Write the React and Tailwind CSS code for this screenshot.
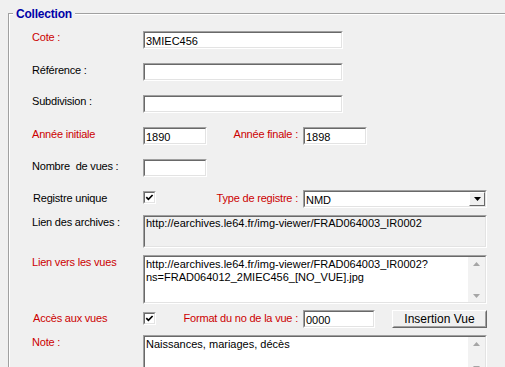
import React from "react";

function Sunken({ className = "", bg = "bg-white", children, inner = "" }) {
  return (
    <div
      className={`border border-t-[#a0a0a0] border-l-[#a0a0a0] border-b-white border-r-white ${className}`}
    >
      <div
        className={`h-full w-full overflow-hidden border border-t-[#696969] border-l-[#696969] border-b-[#e3e3e3] border-r-[#e3e3e3] ${bg} ${inner}`}
      >
        {children}
      </div>
    </div>
  );
}

function Label({ red, className = "", children }) {
  return (
    <div
      className={`shrink-0 whitespace-nowrap text-[11px] leading-[13px] tracking-[-0.2px] ${
        red ? "text-[#cc0000]" : "text-black"
      } ${className}`}
    >
      {children}
    </div>
  );
}

function Field({ className, children }) {
  return (
    <Sunken className={`shrink-0 ${className}`}>
      <div className="whitespace-nowrap px-[1px] pt-[1px] text-[11px] leading-[14px] text-black">
        {children}
      </div>
    </Sunken>
  );
}

function Check() {
  return (
    <Sunken className="h-[13px] w-[13px] shrink-0">
      <svg width="9" height="9" viewBox="0 0 9 9" className="block">
        <path d="M1.3 4.2 L3.4 6.3 L7.6 2" stroke="#000" strokeWidth="1.7" fill="none" />
      </svg>
    </Sunken>
  );
}

function Arrow({ up }) {
  return (
    <svg width="7" height="4" viewBox="0 0 7 4" className="block">
      {up ? (
        <polygon points="3.5,0 7,4 0,4" fill="#a6a6a6" />
      ) : (
        <polygon points="0,0 7,0 3.5,4" fill="#a6a6a6" />
      )}
    </svg>
  );
}

function TextArea({ className, bg = "bg-white", children, scroll = true }) {
  return (
    <Sunken className={`shrink-0 ${className}`} bg={bg} inner="flex">
      <div className="flex-1 px-[1px] pt-[1px] text-[11px] leading-[13px] text-black whitespace-nowrap">
        {children}
      </div>
      {scroll && (
        <div className="flex w-[17px] flex-col items-center justify-between bg-[#f2f2f2] pt-[5px] pb-[4px]">
          <Arrow up />
          <Arrow />
        </div>
      )}
    </Sunken>
  );
}

export default function App() {
  return (
    <div className="h-[367px] w-[505px] overflow-hidden bg-[#f0f0f0] pl-[8px] pt-[13px] font-['Liberation_Sans',Arial,sans-serif] text-black">
      <div className="relative h-[400px] w-[520px] border-l border-t border-[#a0a0a0] shadow-[inset_1px_1px_0_#ffffff]">
        <div className="absolute -top-[7px] left-[4px] bg-[#f0f0f0] px-[3px] text-[12px] font-bold leading-[14px] tracking-[-0.2px] text-[#0000a8]">
          Collection
        </div>

        <div className="flex flex-col pl-[23px] pt-[17px]">
          {/* Cote */}
          <div className="flex items-start">
            <Label red className="w-[111px]">Cote :</Label>
            <Field className="h-[18px] w-[200px]">3MIEC456</Field>
          </div>

          {/* Référence */}
          <div className="mt-[14px] flex items-start">
            <Label className="w-[111px] pt-[1px]">Référence :</Label>
            <Field className="h-[18px] w-[200px]"></Field>
          </div>

          {/* Subdivision */}
          <div className="mt-[14px] flex items-start">
            <Label className="w-[111px]">Subdivision :</Label>
            <Field className="h-[18px] w-[200px]"></Field>
          </div>

          {/* Années */}
          <div className="mt-[14px] flex items-start">
            <Label red className="w-[111px] pt-[1px]">Année initiale</Label>
            <Field className="h-[18px] w-[64px]">1890</Field>
            <Label red className="w-[96px] pr-[5px] pt-[1px] text-right">Année finale :</Label>
            <Field className="h-[18px] w-[64px]">1898</Field>
          </div>

          {/* Nombre de vues */}
          <div className="mt-[14px] flex items-start">
            <Label className="w-[111px] pt-[1px]">Nombre&nbsp; de vues :</Label>
            <Field className="h-[18px] w-[64px]"></Field>
          </div>

          {/* Registre unique */}
          <div className="mt-[13px] flex items-start">
            <Label className="w-[111px] pl-[1px] pt-[2px]">Registre unique</Label>
            <div className="mt-[1px]">
              <Check />
            </div>
            <Label red className="w-[147px] pr-[5px] pt-[2px] text-right">Type de registre :</Label>
            <Sunken className="h-[18px] w-[184px] shrink-0" inner="flex">
              <div className="flex-1 px-[1px] pt-[1px] text-[11px] leading-[14px]">NMD</div>
              <div className="flex h-full w-[16px] items-center justify-center border border-t-white border-l-white border-b-[#696969] border-r-[#696969] bg-[#f0f0f0]">
                <svg width="7" height="4" viewBox="0 0 7 4" className="block">
                  <polygon points="0,0 7,0 3.5,4" fill="#000" />
                </svg>
              </div>
            </Sunken>
          </div>

          {/* Lien des archives */}
          <div className="mt-[7px] flex items-start">
            <Label className="w-[111px] pt-[1px]">Lien des archives :</Label>
            <TextArea className="h-[33px] w-[344px]" bg="bg-[#f0f0f0]" scroll={false}>
              <div className="-mt-[1px]">http://earchives.le64.fr/img-viewer/FRAD064003_IR0002</div>
            </TextArea>
          </div>

          {/* Lien vers les vues */}
          <div className="mt-[7px] flex items-start">
            <Label red className="w-[111px] pt-[1px]">Lien vers les vues</Label>
            <TextArea className="h-[49px] w-[344px]">
              http://earchives.le64.fr/img-viewer/FRAD064003_IR0002?
              <br />
              ns=FRAD064012_2MIEC456_[NO_VUE].jpg
            </TextArea>
          </div>

          {/* Accès aux vues */}
          <div className="mt-[6px] flex items-start">
            <Label red className="w-[111px] pl-[1px] pt-[2px]">Accès aux vues</Label>
            <div className="mt-[2px]">
              <Check />
            </div>
            <Label red className="w-[147px] pr-[5px] pt-[2px] text-right">Format du no de la vue :</Label>
            <Field className="h-[18px] w-[72px]">0000</Field>
            <div className="ml-[17px] h-[18px] w-[95px] shrink-0 border border-t-white border-l-white border-b-[#696969] border-r-[#696969]">
              <div className="flex h-full w-full items-center justify-center border border-t-[#f0f0f0] border-l-[#f0f0f0] border-b-[#a0a0a0] border-r-[#a0a0a0] bg-[#f0f0f0] text-[12px] leading-none text-black">
                Insertion Vue
              </div>
            </div>
          </div>

          {/* Note */}
          <div className="mt-[7px] flex items-start">
            <Label red className="w-[111px] pt-[1px]">Note :</Label>
            <TextArea className="h-[41px] w-[344px]">Naissances, mariages, décès</TextArea>
          </div>
        </div>
      </div>
    </div>
  );
}
